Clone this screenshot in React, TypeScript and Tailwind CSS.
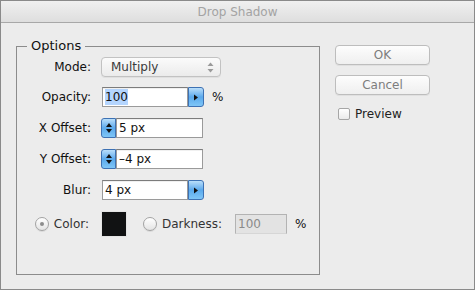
import React from "react";

const font = { fontFamily: '"DejaVu Sans", "Liberation Sans", sans-serif' };

function BlueArrowButton() {
  return (
    <div className="w-[16px] h-[20px] rounded-r-[3px] border border-[#3d71b3] bg-linear-to-b from-[#b9defa] via-[#5aa9ec] to-[#7fc6f7] flex items-center justify-center">
      <svg width="6" height="7" viewBox="0 0 6 7">
        <path d="M1 0.5 L5 3.5 L1 6.5 Z" fill="#111" />
      </svg>
    </div>
  );
}

function Stepper() {
  return (
    <div className="w-[15px] h-[20px] rounded-l-[3px] border border-[#3d71b3] bg-linear-to-b from-[#b9defa] via-[#5aa9ec] to-[#7fc6f7] flex flex-col items-center justify-center gap-[2px]">
      <svg width="6" height="4" viewBox="0 0 6 4">
        <path d="M0 4 L3 0 L6 4 Z" fill="#111" />
      </svg>
      <svg width="6" height="4" viewBox="0 0 6 4">
        <path d="M0 0 L3 4 L6 0 Z" fill="#111" />
      </svg>
    </div>
  );
}

function Radio({ checked }: { checked?: boolean }) {
  return (
    <div className="w-[14px] h-[14px] rounded-full border border-[#a3a3a3] bg-linear-to-b from-[#ffffff] to-[#e4e4e4] flex items-center justify-center shadow-[0_1px_0_rgba(0,0,0,0.08)]">
      {checked && <div className="w-[4px] h-[4px] rounded-full bg-[#8c8c8c]" />}
    </div>
  );
}

function TextField({ children, width }: { children: React.ReactNode; width: string }) {
  return (
    <div
      className={`${width} h-[20px] bg-white border border-[#9a9a9a] border-t-[#7c7c7c] flex items-center pl-[2px] text-[12px] text-[#111] shadow-[inset_0_1px_0_rgba(0,0,0,0.06)]`}
    >
      {children}
    </div>
  );
}

export default function App() {
  return (
    <div
      className="w-[475px] h-[290px] border border-[#8a8a8a] bg-[#ececec] flex flex-col overflow-hidden"
      style={font}
    >
      <div className="h-[22px] shrink-0 border-b border-[#a8a8a8] bg-linear-to-b from-[#f0f0f0] to-[#dedede] flex items-center justify-center text-[12px] text-[#a3a3a3]">
        Drop Shadow
      </div>
      <div className="flex pl-[15px] pt-[15px]">
        <fieldset className="w-[304px] h-[237px] border border-[#8c8c8c] flex flex-col">
          <legend className="ml-[10px] px-[4px] text-[13px] leading-[16px] text-[#111]">Options</legend>

          <div className="flex items-center mt-[3px] h-[20px]">
            <div className="w-[74px] text-right text-[12px] text-[#111]">Mode:</div>
            <div className="ml-[10px] w-[120px] h-[20px] rounded-[4px] border border-[#c2c2c2] bg-linear-to-b from-[#fbfbfb] to-[#ebebeb] flex items-center justify-between pl-[9px] pr-[6px] text-[12px] text-[#3a3a3a] shadow-[0_1px_0_rgba(0,0,0,0.05)]">
              <span>Multiply</span>
              <svg width="7" height="11" viewBox="0 0 7 11">
                <path d="M0.5 4 L3.5 0.5 L6.5 4 Z" fill="#9a9a9a" />
                <path d="M0.5 7 L3.5 10.5 L6.5 7 Z" fill="#9a9a9a" />
              </svg>
            </div>
          </div>

          <div className="flex items-center mt-[10px] h-[20px]">
            <div className="w-[74px] text-right text-[12px] text-[#111]">Opacity:</div>
            <div className="ml-[11px] flex">
              <TextField width="w-[86px]">
                <span className="bg-[#b4d5fe] leading-[16px] px-0">100</span>
              </TextField>
              <BlueArrowButton />
            </div>
            <div className="ml-[8px] text-[12px] text-[#111]">%</div>
          </div>

          <div className="flex items-center mt-[11px] h-[20px]">
            <div className="w-[74px] text-right text-[12px] text-[#111]">X Offset:</div>
            <div className="ml-[10px] flex">
              <Stepper />
              <TextField width="w-[87px]">5 px</TextField>
            </div>
          </div>

          <div className="flex items-center mt-[11px] h-[20px]">
            <div className="w-[74px] text-right text-[12px] text-[#111]">Y Offset:</div>
            <div className="ml-[10px] flex">
              <Stepper />
              <TextField width="w-[87px]">–4 px</TextField>
            </div>
          </div>

          <div className="flex items-center mt-[11px] h-[20px]">
            <div className="w-[74px] text-right text-[12px] text-[#111]">Blur:</div>
            <div className="ml-[11px] flex">
              <TextField width="w-[86px]">4 px</TextField>
              <BlueArrowButton />
            </div>
          </div>

          <div className="flex items-center mt-[11px] h-[26px]">
            <div className="w-[74px] flex items-center justify-end gap-[5px] pr-[2px] text-[12px] text-[#333]">
              <Radio checked />
              <span>Color:</span>
            </div>
            <div className="ml-[10px] w-[26px] h-[26px] bg-[#111213] border border-[#e4e4e4]" />
            <div className="ml-[16px] flex items-center gap-[5px] text-[12px] text-[#333]">
              <Radio />
              <span>Darkness:</span>
            </div>
            <div className="ml-[13px] w-[52px] h-[20px] bg-[#e3e3e3] border border-[#b3b3b3] border-b-[#d6d6d6] flex items-center pl-[2px] text-[12px] text-[#8a8a8a]">
              100
            </div>
            <div className="ml-[8px] text-[12px] text-[#111]">%</div>
          </div>
        </fieldset>

        <div className="ml-[15px] pt-[7px] flex flex-col">
          <div className="w-[95px] h-[20px] rounded-[4px] border border-[#bdbdbd] bg-linear-to-b from-[#fdfdfd] to-[#efefef] flex items-center justify-center text-[12px] text-[#7d7d7d] shadow-[0_1px_0_rgba(0,0,0,0.05)]">
            OK
          </div>
          <div className="mt-[10px] w-[95px] h-[20px] rounded-[4px] border border-[#bdbdbd] bg-linear-to-b from-[#fdfdfd] to-[#efefef] flex items-center justify-center text-[12px] text-[#7d7d7d] shadow-[0_1px_0_rgba(0,0,0,0.05)]">
            Cancel
          </div>
          <div className="mt-[12px] ml-[3px] flex items-center gap-[5px] h-[14px]">
            <div className="w-[12px] h-[12px] rounded-[2px] border border-[#a6a6a6] bg-linear-to-b from-[#ffffff] to-[#ebebeb]" />
            <span className="text-[12px] text-[#222]">Preview</span>
          </div>
        </div>
      </div>
    </div>
  );
}
